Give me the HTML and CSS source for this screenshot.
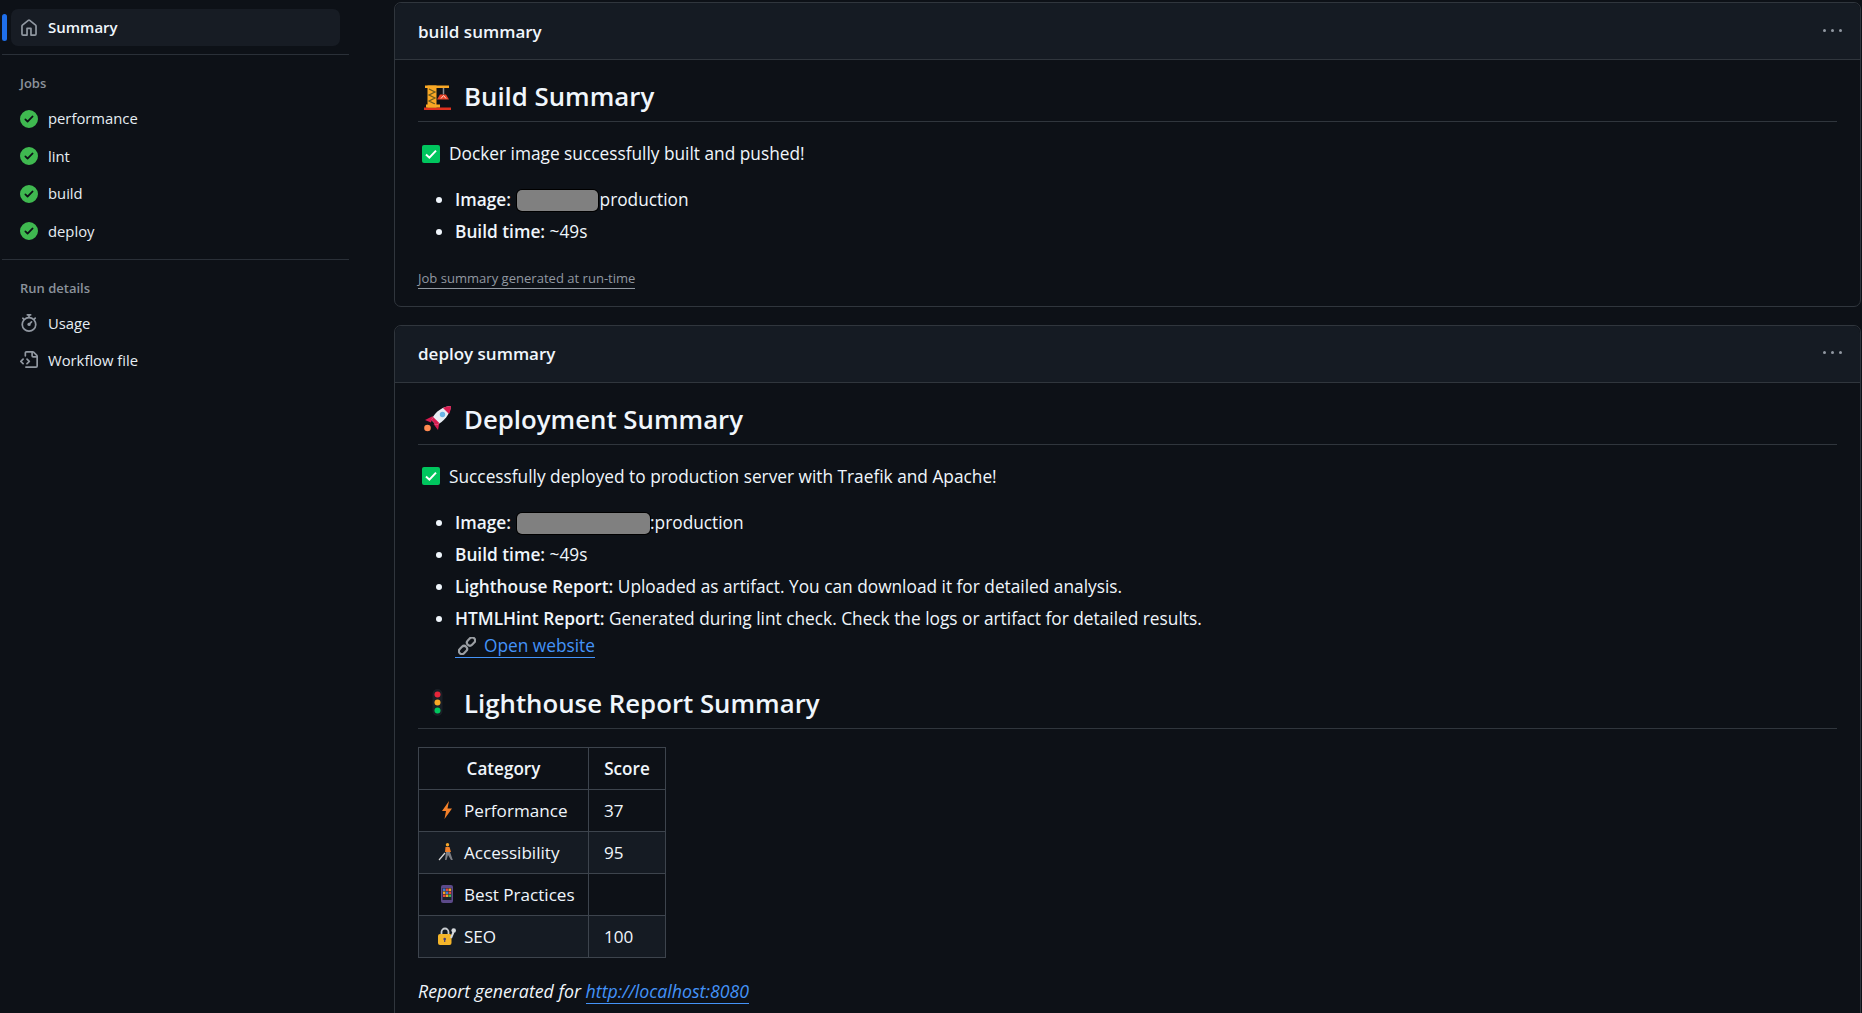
FILE: index.html
```html
<!DOCTYPE html>
<html lang="en">
<head>
<meta charset="utf-8">
<title>Summary</title>
<link rel="stylesheet" href="styles.css">
</head>
<body>
<svg class="defs" width="0" height="0" aria-hidden="true">
  <symbol id="ok" viewBox="0 0 16 16"><path d="M8 16A8 8 0 1 1 8 0a8 8 0 0 1 0 16Zm3.78-9.72a.751.751 0 0 0-.018-1.042.751.751 0 0 0-1.042-.018L6.75 9.19 5.28 7.72a.751.751 0 0 0-1.042.018.751.751 0 0 0-.018 1.042l2 2a.75.75 0 0 0 1.06 0Z"/></symbol>
  <symbol id="box" viewBox="0 0 18 18"><rect width="18" height="18" rx="2" fill="#00c65e"/><path d="M4 9.500l3.400 3.200L14 5.600" fill="none" stroke="#fff" stroke-width="2"/></symbol>
</svg>
<aside class="sidebar">
  <div class="current">
    <span class="current-bar"></span>
    <a class="nav-row nav-selected">
      <svg class="nav-icon" viewBox="0 0 16 16"><path d="M6.906.664a1.749 1.749 0 0 1 2.187 0l5.25 4.2c.415.332.657.835.657 1.367v7.019A1.75 1.75 0 0 1 13.25 15h-3.5a.75.75 0 0 1-.75-.75V9H7v5.25a.75.75 0 0 1-.75.75h-3.5A1.75 1.75 0 0 1 1 13.25V6.23c0-.531.242-1.034.657-1.366l5.25-4.2Zm1.25 1.171a.25.25 0 0 0-.312 0l-5.25 4.2a.25.25 0 0 0-.094.196v7.019c0 .138.112.25.25.25H5.5V8.25a.75.75 0 0 1 .75-.75h3.5a.75.75 0 0 1 .75.75v5.25h2.75a.25.25 0 0 0 .25-.25V6.23a.25.25 0 0 0-.094-.195Z"/></svg>
      <span>Summary</span>
    </a>
  </div>
  <section class="nav-section">
    <h3 class="nav-head">Jobs</h3>
    <a class="nav-row job"><svg class="nav-icon ok"><use href="#ok"/></svg><span>performance</span></a>
    <a class="nav-row job"><svg class="nav-icon ok"><use href="#ok"/></svg><span>lint</span></a>
    <a class="nav-row job"><svg class="nav-icon ok"><use href="#ok"/></svg><span>build</span></a>
    <a class="nav-row job"><svg class="nav-icon ok"><use href="#ok"/></svg><span>deploy</span></a>
  </section>
  <section class="nav-section">
    <h3 class="nav-head">Run details</h3>
    <a class="nav-row job">
      <svg class="nav-icon" viewBox="0 0 16 16"><path d="M5.75.75A.75.75 0 0 1 6.5 0h3a.75.75 0 0 1 0 1.5h-.75v1l-.001.041a6.724 6.724 0 0 1 3.464 1.435l.007-.006.75-.75a.75.75 0 1 1 1.06 1.06l-.75.75-.006.007a6.75 6.75 0 1 1-10.548 0L2.72 5.03l-.75-.75a.751.751 0 0 1 .018-1.042.751.751 0 0 1 1.042-.018l.75.75.007.006A6.72 6.72 0 0 1 7.25 2.541V1.5H6.5a.75.75 0 0 1-.75-.75ZM8 14.5a5.25 5.25 0 1 0-.001-10.501A5.25 5.25 0 0 0 8 14.5Zm.389-6.7 1.33-1.33a.75.75 0 1 1 1.061 1.06L9.45 8.861A1.503 1.503 0 0 1 8 10.75a1.499 1.499 0 1 1 .389-2.95Z"/></svg>
      <span>Usage</span>
    </a>
    <a class="nav-row job">
      <svg class="nav-icon" viewBox="0 0 16 16"><path d="M4 1.75C4 .784 4.784 0 5.75 0h5.586c.464 0 .909.184 1.237.513l2.914 2.914c.329.328.513.773.513 1.237v8.586A1.75 1.75 0 0 1 14.25 15h-9a.75.75 0 0 1 0-1.5h9a.25.25 0 0 0 .25-.25V6h-2.75A1.75 1.75 0 0 1 10 4.25V1.5H5.75a.25.25 0 0 0-.25.25v2.5a.75.75 0 0 1-1.5 0Zm1.72 4.97a.75.75 0 0 1 1.06 0l2 2a.75.75 0 0 1 0 1.06l-2 2a.749.749 0 0 1-1.275-.326.749.749 0 0 1 .215-.734l1.47-1.47-1.47-1.47a.75.75 0 0 1 0-1.06ZM3.28 7.78 1.81 9.25l1.47 1.47a.751.751 0 0 1-.018 1.042.751.751 0 0 1-1.042.018l-2-2a.75.75 0 0 1 0-1.06l2-2a.751.751 0 0 1 1.042.018.751.751 0 0 1 .018 1.042Zm8.22-6.218V4.25c0 .138.112.25.25.25h2.688l-.011-.013-2.914-2.914-.013-.011Z"/></svg>
      <span>Workflow file</span>
    </a>
  </section>
</aside>
<main class="main">
  <article class="card">
    <header class="card-head"><span>build summary</span><span class="dots"><i></i><i></i><i></i></span></header>
    <div class="md">
      <h2 class="md-h2">
        <svg class="emoji-lg" viewBox="0 0 27 27"><rect x="0" y="24.500" width="27" height="2.500" fill="#e0301e"/><rect x="1" y="2.500" width="24" height="2.500" fill="#f9a825"/><rect x="3.500" y="2.500" width="9" height="22" fill="#f9a825"/><path d="M5 6l6 3-6 3 6 3-6 3 6 3" fill="none" stroke="#6b5a1e" stroke-width="1.200"/><rect x="2" y="21.500" width="14" height="3" fill="#f9a825"/><path d="M19.500 5v6.500" stroke="#8a8f95" stroke-width="1.500"/><path d="M13 16.500l3-5h6l3 5z" fill="#e8442a"/><path d="M17 15.500l2.500-3 2.500 3" fill="none" stroke="#ffd9c9" stroke-width="1"/></svg>
        <span>Build Summary</span>
      </h2>
      <p class="md-p"><svg class="emoji-box"><use href="#box"/></svg><span>Docker image successfully built and pushed!</span></p>
      <ul class="md-list">
        <li><b>Image:</b> <span class="redact redact-a"></span>production</li>
        <li><b>Build time:</b> ~49s</li>
      </ul>
      <a class="generated">Job summary generated at run-time</a>
    </div>
  </article>
  <article class="card">
    <header class="card-head"><span>deploy summary</span><span class="dots"><i></i><i></i><i></i></span></header>
    <div class="md">
      <h2 class="md-h2">
        <svg class="emoji-lg" viewBox="0 0 27 27"><circle cx="3.500" cy="23" r="3.300" fill="#ff8a50"/><path d="M9 11L1 15l6 2.500z" fill="#d81b50"/><path d="M15.500 17L14 25l-4.500-6z" fill="#d81b50"/><path d="M27 1C20 1 11 6 7.500 15l4.500 5C20 17 26 9 27 1z" fill="#e8edf3"/><path d="M27 1c-3 0-6 .8-8 2l6 6c1.300-2.500 2-5.300 2-8z" fill="#d81b50"/><path d="M7.500 15l4.500 5 3.500-1.800-6.300-6.200z" fill="#d81b50"/><circle cx="18.500" cy="9.500" r="2.700" fill="#6cb4e6"/></svg>
        <span>Deployment Summary</span>
      </h2>
      <p class="md-p"><svg class="emoji-box"><use href="#box"/></svg><span>Successfully deployed to production server with Traefik and Apache!</span></p>
      <ul class="md-list">
        <li><b>Image:</b> <span class="redact redact-b"></span>:production</li>
        <li><b>Build time:</b> ~49s</li>
        <li><b>Lighthouse Report:</b> Uploaded as artifact. You can download it for detailed analysis.</li>
        <li><b>HTMLHint Report:</b> Generated during lint check. Check the logs or artifact for detailed results.<br>
          <a class="link"><svg class="emoji-link" viewBox="0 0 18 18"><g fill="none" stroke="#9a9ea3" stroke-width="2.200"><rect x="8.500" y="1.500" width="9" height="6" rx="3" transform="rotate(-45 13 4.500)"/><rect x="0.500" y="10" width="9" height="6" rx="3" transform="rotate(-45 5 13)"/></g></svg>Open website</a></li>
      </ul>
      <h2 class="md-h2">
        <svg class="emoji-lg" viewBox="0 0 27 27"><rect x="8.500" y="0" width="10" height="27" rx="5" fill="#1a1f26"/><circle cx="13.500" cy="5.500" r="3" fill="#e8263a"/><circle cx="13.500" cy="13.500" r="3" fill="#f9a825"/><circle cx="13.500" cy="21.500" r="3" fill="#00c65e"/></svg>
        <span>Lighthouse Report Summary</span>
      </h2>
      <table class="scores">
        <thead><tr><th class="col-cat">Category</th><th class="col-score">Score</th></tr></thead>
        <tbody>
          <tr><td><span class="cat"><svg class="emoji-sm" viewBox="0 0 18 18"><path d="M11 0L4 10h4L6.500 18 14 7.500H9.500z" fill="#f4812a"/></svg>Performance</span></td><td>37</td></tr>
          <tr><td><span class="cat"><svg class="emoji-sm" viewBox="0 0 18 18"><path d="M1 17l6-7" stroke="#d9d9d9" stroke-width="1.200"/><circle cx="9.500" cy="1.800" r="1.700" fill="#f4a62a"/><path d="M7.500 4h4l1.500 5H7z" fill="#f4812a"/><path d="M8 9l-1 8h1.500L10 12l3 5h1.800L12 9z" fill="#7d7f85"/></svg>Accessibility</span></td><td>95</td></tr>
          <tr><td><span class="cat"><svg class="emoji-sm" viewBox="0 0 18 18"><rect x="3" y="0" width="12" height="18" rx="2" fill="#5c4a8a"/><rect x="4.500" y="3" width="9" height="12" fill="#20222b"/><rect x="5" y="3.500" width="2.500" height="2.500" fill="#3d7bd9"/><rect x="7.800" y="3.500" width="2.500" height="2.500" fill="#e84a3a"/><rect x="10.600" y="3.500" width="2.500" height="2.500" fill="#f4a62a"/><rect x="5" y="6.500" width="2.500" height="2.500" fill="#f4a62a"/><rect x="7.800" y="6.500" width="2.500" height="2.500" fill="#3d7bd9"/><rect x="10.600" y="6.500" width="2.500" height="2.500" fill="#e84a3a"/><rect x="5" y="9.500" width="2.500" height="2.500" fill="#e84a3a"/><rect x="7.800" y="9.500" width="2.500" height="2.500" fill="#f4a62a"/><rect x="10.600" y="9.500" width="2.500" height="2.500" fill="#3fb950"/></svg>Best Practices</span></td><td></td></tr>
          <tr><td><span class="cat"><svg class="emoji-sm" viewBox="0 0 18 18"><path d="M3.500 8V5a3.500 3.500 0 0 1 7 0v3" fill="none" stroke="#c8ccd0" stroke-width="1.800"/><rect x="0" y="7" width="13.500" height="11" rx="2" fill="#f4b52a"/><circle cx="6.700" cy="12" r="1.300" fill="#4a3f7a"/><rect x="6.100" y="12" width="1.200" height="3" fill="#4a3f7a"/><path d="M13 11l2.500-6" stroke="#d5d8dc" stroke-width="2"/><circle cx="15.700" cy="3.500" r="2.300" fill="#d5d8dc"/></svg>SEO</span></td><td>100</td></tr>
        </tbody>
      </table>
      <p class="report"><em>Report generated for <a class="link">http://localhost:8080</a></em></p>
    </div>
  </article>
</main>
</body>
</html>
```

FILE: styles.css
```css
* { box-sizing: border-box; }
html, body { margin: 0; height: 100%; overflow: hidden; }
body {
  display: flex;
  background: #0d1117;
  color: #f0f6fc;
  font-family: "Open Sans", "Noto Sans", sans-serif;
  font-size: 17.300px;
  line-height: 27px;
}
.defs { position: absolute; }
.sidebar { width: 394px; flex: none; padding: 9px 45px 0 2px; font-size: 14.800px; }
.current { display: flex; align-items: center; gap: 4px; padding-bottom: 8px; border-bottom: 1px solid #2a3038; }
.current-bar { width: 5px; height: 27px; background: #1f6feb; border-radius: 3px; }
.nav-row { display: flex; align-items: center; gap: 10px; height: 37.500px; padding-left: 18px; color: #e6edf3; }
.nav-selected { flex: none; width: 329px; height: 37px; padding-left: 9px; background: #171c24; border-radius: 7px; font-size: 15px; font-weight: 600; color: #f0f6fc; }
.nav-icon { width: 18px; height: 18px; fill: #9198a1; flex: none; }
.nav-icon.ok { fill: #3fb950; }
.nav-section { padding-bottom: 8.750px; border-bottom: 1px solid #2a3038; }
.nav-section:last-child { border-bottom: 0; }
.nav-section:last-child .nav-row { height: 37px; }
.nav-head { margin: 0; padding: 16px 0 5px 18px; font-size: 13px; line-height: 24px; font-weight: 600; color: #8b929b; }
.main { flex: 1; min-width: 0; padding: 2px 1px 0 0; display: flex; flex-direction: column; gap: 18px; }
.card { flex: none; border: 1px solid #30363d; border-radius: 7px; }
.card-head { display: flex; justify-content: space-between; align-items: center; height: 57px; padding: 0 18px 0 23px; background: #151b23; border-bottom: 1px solid #30363d; border-radius: 7px 7px 0 0; font-size: 17px; font-weight: 600; }
.dots { display: flex; gap: 5px; margin-bottom: 2px; }
.dots i { width: 3px; height: 3px; background: #9198a1; border-radius: 50%; }
.md { padding: 19px 23px 0; }
.md-h2 { display: flex; align-items: center; gap: 13px; margin: 27px 0 18px; padding-bottom: 8px; padding-left: 6px; height: 43px; border-bottom: 1px solid #30363d; font-size: 25.800px; line-height: 34px; font-weight: 600; }
.md-h2:first-child { margin-top: 0; }
.emoji-lg { width: 27px; height: 27px; flex: none; }
.md-p { display: flex; align-items: center; gap: 9px; margin: 0 0 18px; padding-left: 4px; }
.emoji-box { width: 18px; height: 18px; flex: none; }
.md-list { margin: 0 0 18px; padding: 1px 0 0 37px; }
.md-list li { margin-bottom: 5px; }
.md-list li:last-child { margin-bottom: 0; }
.md-list b { font-weight: 600; }
.md-list li::marker { font-size: 18px; }
.redact { display: inline-block; height: 21px; margin-left: 1.500px; vertical-align: -5px; background: #808080; border-radius: 5px; box-shadow: 0 0 0 1px #000; }
.redact-a { width: 81px; margin-right: 1.500px; }
.redact-b { width: 133px; }
.generated { display: inline-block; margin-bottom: 16.500px; font-size: 13.050px; line-height: 20px; color: #9198a1; border-bottom: 1px solid #9198a1; }
.link { color: #4493f8; border-bottom: 1px solid #4493f8; }
.emoji-link { width: 18px; height: 18px; margin: 0 8px 0 3px; vertical-align: -3px; }
.scores { border-collapse: collapse; table-layout: fixed; width: 247px; margin-bottom: 20px; }
.scores th, .scores td { height: 42px; padding: 0 15px; border: 1px solid #3d444d; font-size: 17.100px; white-space: nowrap; }
.scores th { font-weight: 600; text-align: center; }
.scores tbody tr:nth-child(even) { background: #151b23; }
.col-cat { width: 170px; }
.col-score { width: 77px; }
.cat { display: flex; align-items: center; gap: 8px; padding-left: 4px; }
.emoji-sm { width: 18px; height: 18px; flex: none; }
.report { margin: 0 0 40px; font-size: 17.750px; }
```
